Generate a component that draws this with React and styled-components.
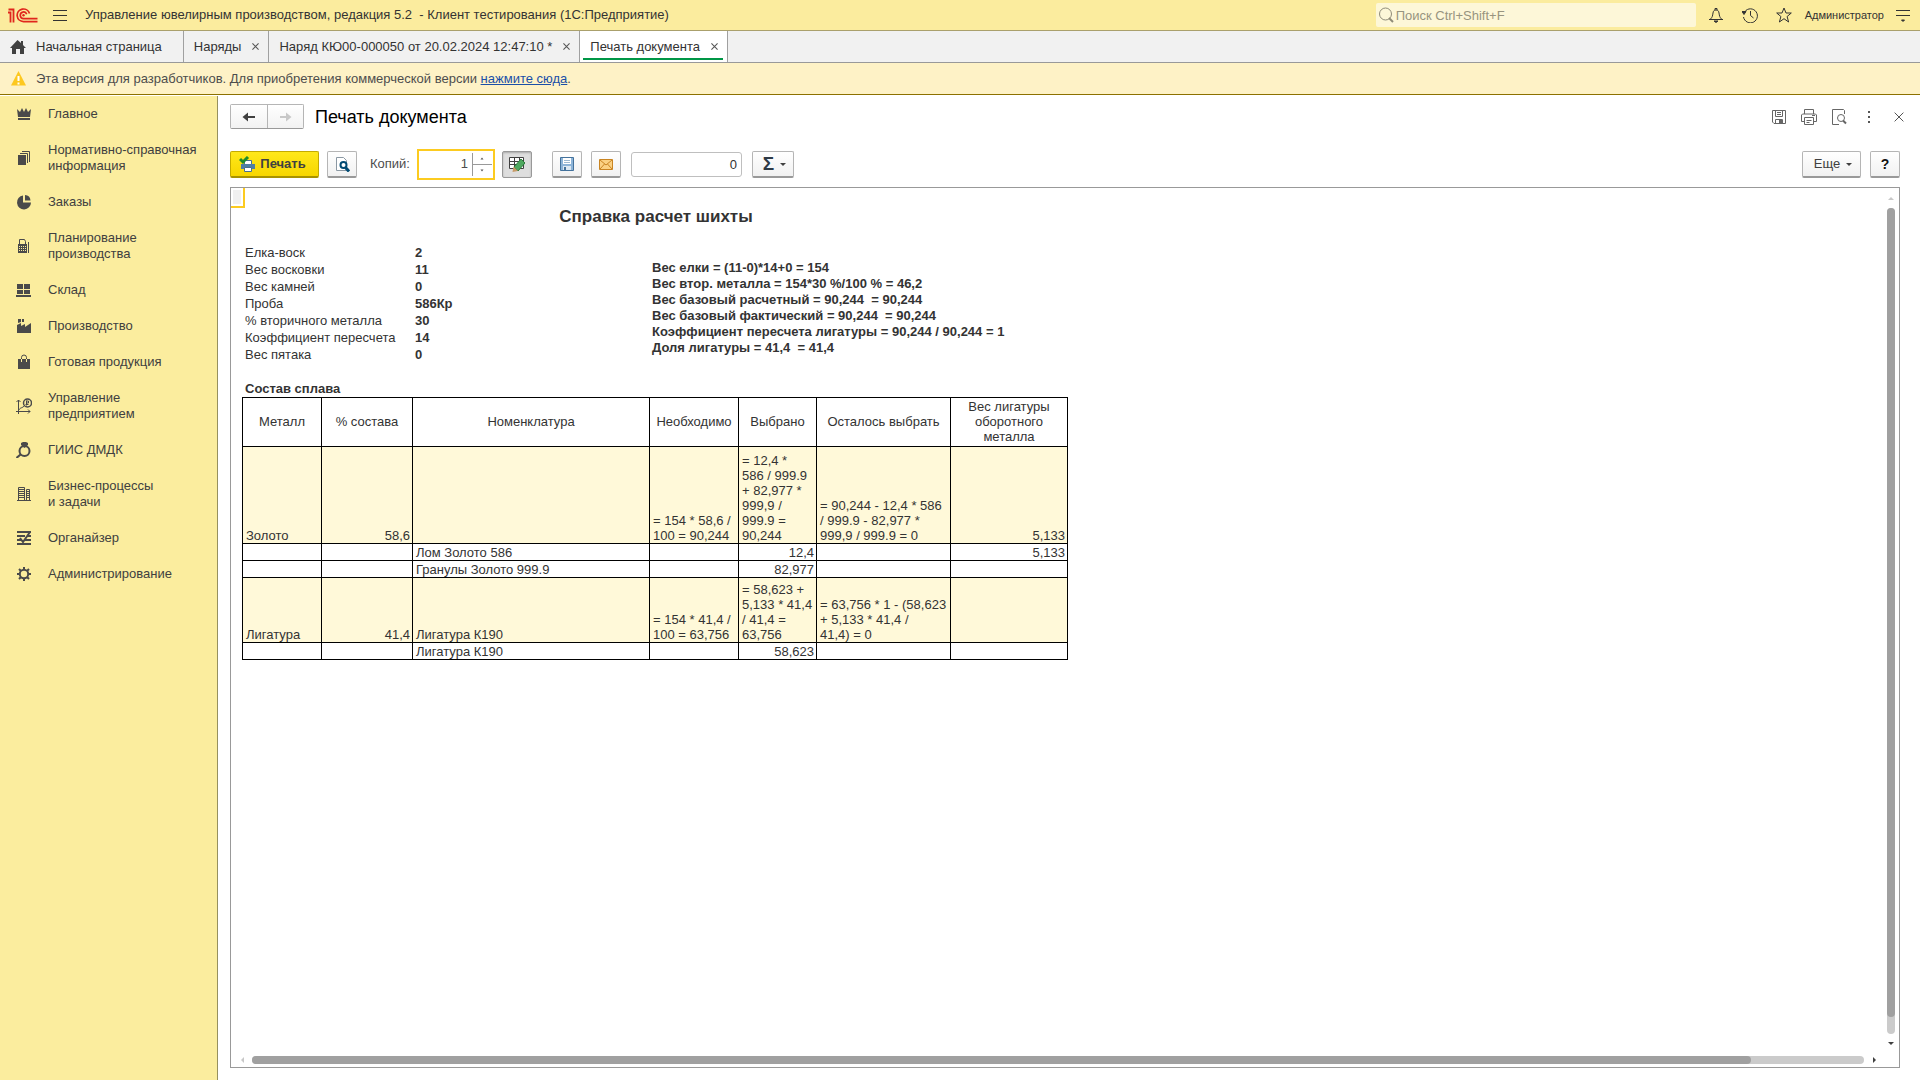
import React from "react";
import styled, { createGlobalStyle } from "styled-components";

const GlobalStyle = createGlobalStyle`
   * {
      box-sizing: border-box;
   }

   body {
      margin: 0;
      background: #fff;
      color: #333;
      font-family: "Liberation Sans", Arial, sans-serif;
      font-size: 13px;
      line-height: 16px;
   }

   button,
   input {
      font: inherit;
      color: inherit;
   }

   button {
      cursor: pointer;
   }

   svg {
      display: block;
      flex: none;
   }
`;

const Page = styled.div`
   display: flex;
   flex-direction: column;
   min-height: 100vh;
`;

const TopBar = styled.header`
   display: flex;
   align-items: center;
   height: 31px;
   padding: 0 9px 0 8px;
   background: #fbec9e;
   border-bottom: 1px solid #aaa06c;
`;

const PlainButton = styled.button`
   display: flex;
   align-items: center;
   justify-content: center;
   width: ${props => props.$width || 16}px;
   height: 20px;
   padding: 0;
   border: 0;
   background: none;
   color: #333;
`;

const AppTitle = styled.h1`
   flex: 1;
   margin: 0 0 0 3px;
   font-size: 13px;
   font-weight: 400;
   white-space: pre;
`;

const Search = styled.label`
   display: flex;
   align-items: center;
   gap: 2px;
   width: 320px;
   height: 24px;
   padding: 0 2px;
   border-radius: 2px;
   background: #fdf7d8;
   color: #8f8b78;

   input {
      flex: 1;
      min-width: 0;
      height: 20px;
      padding: 0;
      border: 0;
      outline: 0;
      background: none;
   }

   input::placeholder {
      color: #98947f;
      opacity: 1;
   }
`;

const TopTools = styled.div`
   display: flex;
   align-items: center;
   gap: 16px;
   margin-left: 11px;
`;

const UserName = styled.a`
   margin: 0 -5px 0 -4px;
   color: #333;
   font-size: 11px;
   text-decoration: none;
`;

const TabBar = styled.nav`
   display: flex;
   height: 32px;
   background: #f1f1f1;
   border-bottom: 1px solid #999;
`;

const Tab = styled.div`
   display: flex;
   align-items: center;
   gap: 8px;
   padding: 0 6px 0 10px;
   border-right: 1px solid #a0a0a0;
   background: ${props => (props.$active ? "#fff" : "transparent")};
   box-shadow: ${props =>
      props.$active
         ? "inset 3px 0 #fff, inset -4px 0 #fff, inset 0 -2px #fff, inset 0 -4px #009646"
         : "none"};

   a {
      display: flex;
      align-items: center;
      gap: 10px;
      color: #333;
      text-decoration: none;
   }
`;

const HomeTab = styled(Tab)`
   padding-right: 21px;
`;

const Notice = styled.div`
   display: flex;
   align-items: center;
   gap: 10px;
   height: 32px;
   padding-left: 11px;
   background: #fef2c6;
   border-bottom: 1px solid #8c7100;
   color: #4d4d4d;

   a {
      color: #1a4fa8;
   }
`;

const Body = styled.div`
   display: flex;
   flex: 1;
   padding-top: 1px;
`;

const Sidebar = styled.nav`
   width: 218px;
   flex: none;
   background: #fbed9e;
   border-right: 1px solid #96905e;
`;

const SideLink = styled.a`
   display: flex;
   align-items: center;
   gap: 16px;
   padding: 10px 8px 10px 16px;
   color: #404040;
   text-decoration: none;

   span {
      white-space: pre-line;
   }
`;

const Main = styled.main`
   display: flex;
   flex: 1;
   flex-direction: column;
   min-width: 0;
   padding: 8px 20px 12px 12px;
`;

const FormHead = styled.div`
   display: flex;
   align-items: center;
   height: 25px;
`;

const History = styled.div`
   display: flex;
   height: 25px;
   border: 1px solid #b5b5b5;
   border-bottom-color: #999;
   border-radius: 2px;

   button {
      display: flex;
      align-items: center;
      justify-content: center;
      width: 36px;
      padding: 0;
      border: 0;
      background: linear-gradient(#fff, #f2f2f2);
   }

   button + button {
      border-left: 1px solid #b5b5b5;
   }
`;

const FormTitle = styled.h2`
   flex: 1;
   margin: 0 0 0 11px;
   color: #000;
   font-size: 18px;
   font-weight: 400;
   line-height: 24px;
`;

const FormTools = styled.div`
   display: flex;
   align-items: center;
   gap: 14px;
   margin-right: -7px;
`;

const Toolbar = styled.div`
   display: flex;
   align-items: center;
   height: 32px;
   margin: 19px 0 7px;
`;

const ToolButton = styled.button`
   display: flex;
   align-items: center;
   justify-content: center;
   gap: 5px;
   width: ${props => props.$width || 30}px;
   height: 27px;
   margin-right: ${props => props.$after || 0}px;
   padding: 0;
   border: 1px solid #b5b5b5;
   border-bottom: 2px solid #999;
   border-radius: 2px;
   background: linear-gradient(#fff, #f1f1f1);
   color: #404040;
`;

const PrintButton = styled(ToolButton)`
   padding-right: 4px;
   border-color: #c4ab00;
   border-bottom-color: #a89200;
   background: linear-gradient(#ffe81a, #f7d600);
   font-weight: 700;
`;

const MenuButton = styled(ToolButton)`
   padding-left: 4px;
`;

const PressedButton = styled(ToolButton)`
   border: 1px solid #999;
   background: #dedede;
   box-shadow: inset 0 1px 2px #aaa;
`;

const CopiesLabel = styled.label`
   margin-right: 7px;
   color: #4d4d4d;
`;

const Spinner = styled.div`
   display: flex;
   width: 78px;
   height: 31px;
   margin-right: 7px;
   padding: 2px 1px;
   border: 2px solid #fccb20;
   background: #fff;

   input {
      flex: 1;
      min-width: 0;
      padding: 0 4px;
      border: 0;
      outline: 0;
      color: #4d4d4d;
      text-align: right;
   }
`;

const Steps = styled.div`
   display: flex;
   flex-direction: column;
   width: 20px;
   border-left: 1px solid #999;

   button {
      display: flex;
      flex: 1;
      align-items: center;
      justify-content: center;
      padding: 0;
      border: 0;
      background: none;
   }

   button + button {
      border-top: 1px solid #999;
   }
`;

const SumInput = styled.input`
   width: 111px;
   height: 25px;
   margin-right: 10px;
   padding: 0 4px;
   border: 1px solid #bfbfbf;
   border-radius: 3px;
   text-align: right;
`;

const Sigma = styled.span`
   font-size: 19px;
   font-weight: 700;
   line-height: 20px;
   color: #2e3a46;
`;

const Spacer = styled.div`
   flex: 1;
`;

const HelpMark = styled.span`
   color: #111;
   font-size: 14px;
   font-weight: 700;
`;

const Report = styled.section`
   position: relative;
   display: grid;
   flex: 1;
   grid-template-columns: 1fr 18px;
   grid-template-rows: 1fr 16px;
   border: 1px solid #999;
   background: #fff;
`;

const CellCursor = styled.div`
   position: absolute;
   top: 0;
   left: 0;
   width: 14px;
   height: 20px;
   border: solid #fccb20;
   border-width: 0 2px 2px 0;
   background: #f0f0f0;
   box-shadow: inset 0 0 0 2px #fff;
`;

const Sheet = styled.div`
   min-width: 0;
   padding: 19px 0 0 11px;
`;

const SheetTitle = styled.h3`
   width: 828px;
   margin: 0 0 17px;
   color: #333;
   font-size: 17px;
   line-height: 20px;
   text-align: center;
`;

const Summary = styled.div`
   display: flex;
   align-items: flex-start;
   padding-left: 3px;
`;

const Facts = styled.dl`
   display: grid;
   grid-template-columns: 170px 237px;
   margin: 0;
   line-height: 17px;

   dd {
      margin: 0;
      font-weight: 700;
   }
`;

const Formulas = styled.div`
   padding-top: 16px;
   font-weight: 700;
   white-space: pre;
`;

const TableTitle = styled.h4`
   margin: 17px 0 0;
   padding-left: 3px;
   font-size: 13px;
   line-height: 17px;
`;

const Alloy = styled.table`
   width: 826px;
   table-layout: fixed;
   border: solid #000;
   border-width: 1px 0 0 1px;
   border-spacing: 0;
   line-height: 15px;

   th,
   td {
      padding: 0 2px 0 3px;
      border: solid #000;
      border-width: 0 1px 1px 0;
      white-space: pre-line;
   }

   th {
      padding: 0 2px 2px;
      font-weight: 400;
      vertical-align: middle;
   }

   td {
      vertical-align: bottom;
   }
`;

const Row = styled.tr`
   height: ${props => props.$height}px;
   background: ${props => (props.$group ? "#fff9d9" : "#fff")};
`;

const Cell = styled.td`
   text-align: ${props => props.$align || "left"};
`;

const VScroll = styled.div`
   display: flex;
   flex-direction: column;
   align-items: center;
   padding: 7px 0 4px 1px;
`;

const HScroll = styled.div`
   display: flex;
   align-items: center;
   padding: 1px 3px 0 8px;
`;

const VTrack = styled.div`
   flex: 1;
   width: 8px;
   margin: 5px 0;
   border-radius: 4px;
   background: #cbcbcb;
`;

const VThumb = styled.div`
   height: 98%;
   border-radius: 4px;
   background: #a0a0a0;
`;

const HTrack = styled.div`
   flex: 1;
   height: 8px;
   margin: 0 6px 0 5px;
   border-radius: 4px;
   background: #cbcbcb;
`;

const HThumb = styled.div`
   width: 93%;
   height: 8px;
   border-radius: 4px;
   background: #a0a0a0;
`;

const Icon = ({ size = 16, children, ...rest }) => (
   <svg
      width={size}
      height={size}
      viewBox={`0 0 ${size} ${size}`}
      fill="none"
      aria-hidden="true"
      {...rest}
   >
      {children}
   </svg>
);

const Cross = ({ size = 7, color = "#555" }) => (
   <svg width={size} height={size} viewBox="0 0 8 8" aria-hidden="true">
      <path d="M.5.5l7 7M7.5.5l-7 7" stroke={color} strokeWidth={size > 8 ? 0.8 : 1.2} />
   </svg>
);

const Arrow = ({ dir = "down", color = "#404040" }) => {
   const shapes = {
      down: "M1 3h6L4 6z",
      up: "M1 5h6L4 2z",
      left: "M5 1v6L2 4z",
      right: "M3 1v6l3-3z"
   };
   return (
      <svg width="8" height="8" viewBox="0 0 8 8" aria-hidden="true">
         <path d={shapes[dir]} fill={color} />
      </svg>
   );
};

const Logo = () => (
   <svg width="30" height="15" viewBox="0 0 30 15" fill="none" aria-label="1С">
      <path d="M0 4.500h2.500V14.500M.500 1.500H5.500V14.500" stroke="#e0261c" strokeWidth="1.800" />
      <path
         d="M21.500 5.500A6.300 6.300 0 1 0 15.500 13.600H29.500M18.700 6.200A3.300 3.300 0 1 0 15.500 10.600H29.500"
         stroke="#e0261c"
         strokeWidth="1.700"
      />
      <circle cx="15.500" cy="7.300" r="1.200" fill="#e0261c" />
   </svg>
);

const sideIcons = {
   crown: (
      <path d="M1 3l3 3 2-4 2 4 2-4 2 4 3-3-1 8H2zM2 12h12v2H2z" fill="#4a4a4a" />
   ),
   books: (
      <g>
         <path d="M2 5h8v10H2z" fill="#4a4a4a" />
         <path d="M4 3.500h7.500V13M6 1.500h7.500V12" stroke="#4a4a4a" />
      </g>
   ),
   pie: (
      <g fill="#4a4a4a">
         <path d="M7 1.500v7h8a7 7 0 1 1-8-7z" />
         <path d="M9 1a6 6 0 0 1 5.500 5.500H9z" />
      </g>
   ),
   register: (
      <g>
         <path d="M2 6h9v9H2zM12 4h1v11h-1z" fill="#4a4a4a" />
         <path d="M3.500 6V1.500h5l1 2V6" stroke="#4a4a4a" />
         <path
            d="M3 8.500h7M3 10.500h7M3 12.500h7"
            stroke="#fbed9e"
            strokeDasharray="1 1"
         />
      </g>
   ),
   stock: (
      <path
         d="M1 2h6v5H1zM8 2h6v5H8zM1 8h6v4H1zM8 8h6v4H8zM0 13h15v2H0z"
         fill="#4a4a4a"
      />
   ),
   factory: (
      <path d="M1 15V7l4-2v3l4-2v3l6-4v10zM2 1h3v3L2 5zM6 1h2v3H6z" fill="#4a4a4a" />
   ),
   bag: (
      <g>
         <path d="M2 5h12v10H2z" fill="#4a4a4a" />
         <path d="M5.500 5V3.500Q5.500 1 8 1t2.500 2.500V5" stroke="#4a4a4a" />
         <path d="M5.500 5v3M10.500 5v3" stroke="#fbed9e" />
      </g>
   ),
   manage: (
      <g>
         <path
            d="M2.500 2v14M0 13.500h14M.500 4l2-2 2 2M12 11.500l2 2-2 2M3 12c1-3 3-1 6-5"
            stroke="#4a4a4a"
         />
         <circle cx="11.500" cy="5" r="4" fill="#fbed9e" stroke="#4a4a4a" strokeWidth="1.500" />
         <path d="M10.500 2.500v5M10.500 3h2v2h-2M9.500 6.500h3" stroke="#4a4a4a" />
      </g>
   ),
   ring: (
      <g>
         <circle cx="8.500" cy="9" r="5" stroke="#4a4a4a" strokeWidth="2" />
         <path d="M4.500 12.500L.500 16" stroke="#4a4a4a" strokeWidth="2" />
         <path d="M5 1l2-1h3l2 1v2L8.500 6 5 3z" fill="#4a4a4a" />
      </g>
   ),
   building: (
      <g>
         <path
            d="M2.500 15V1.500h6V15M10.500 15V3.500h3V15M1 14.500h14"
            stroke="#4a4a4a"
         />
         <path
            d="M3 3.500h5M3 5.500h5M3 7.500h5M3 9.500h5M3 11.500h5M10 5.500h4M10 7.500h4M10 9.500h4M10 11.500h4"
            stroke="#4a4a4a"
         />
      </g>
   ),
   organizer: (
      <path
         d="M1 2h14M1 6h8M12 6h3M1 10h4M9 10h6M1 14h14M14 2L7 12 4 8"
         stroke="#4a4a4a"
         strokeWidth="2"
      />
   ),
   gear: (
      <g stroke="#4a4a4a" strokeWidth="2">
         <circle cx="8" cy="8" r="4.200" />
         <path d="M8 1v3M8 12v3M1 8h3M12 8h3M3 3l2 2M11 11l2 2M13 3l-2 2M5 11l-2 2" />
      </g>
   )
};

const sections = [
   { icon: "crown", text: "Главное" },
   { icon: "books", text: "Нормативно-справочная\nинформация" },
   { icon: "pie", text: "Заказы" },
   { icon: "register", text: "Планирование\nпроизводства" },
   { icon: "stock", text: "Склад" },
   { icon: "factory", text: "Производство" },
   { icon: "bag", text: "Готовая продукция" },
   { icon: "manage", text: "Управление\nпредприятием" },
   { icon: "ring", text: "ГИИС ДМДК" },
   { icon: "building", text: "Бизнес-процессы\nи задачи" },
   { icon: "organizer", text: "Органайзер" },
   { icon: "gear", text: "Администрирование" }
];

const tabs = [
   { text: "Наряды" },
   { text: "Наряд КЮ00-000050 от 20.02.2024 12:47:10 *" },
   { text: "Печать документа", active: true }
];

const facts = [
   ["Елка-воск", "2"],
   ["Вес восковки", "11"],
   ["Вес камней", "0"],
   ["Проба", "586Кр"],
   ["% вторичного металла", "30"],
   ["Коэффициент пересчета", "14"],
   ["Вес пятака", "0"]
];

const formulas = [
   "Вес елки = (11-0)*14+0 = 154",
   "Вес втор. металла = 154*30 %/100 % = 46,2",
   "Вес базовый расчетный = 90,244  = 90,244",
   "Вес базовый фактический = 90,244  = 90,244",
   "Коэффициент пересчета лигатуры = 90,244 / 90,244 = 1",
   "Доля лигатуры = 41,4  = 41,4"
];

const columns = [
   { title: "Металл", width: 79 },
   { title: "% состава", width: 91, align: "right" },
   { title: "Номенклатура", width: 237 },
   { title: "Необходимо", width: 89 },
   { title: "Выбрано", width: 78 },
   { title: "Осталось выбрать", width: 134 },
   { title: "Вес лигатуры оборотного металла", width: 117, align: "right" }
];

const rows = [
   {
      group: true,
      height: 97,
      cells: [
         "Золото",
         "58,6",
         "",
         "= 154 * 58,6 /\n100 = 90,244",
         "= 12,4 *\n586 / 999.9\n+ 82,977 *\n999,9 /\n999.9 =\n90,244",
         "= 90,244 - 12,4 * 586\n/ 999.9 - 82,977 *\n999,9 / 999.9 = 0",
         "5,133"
      ]
   },
   { height: 17, cells: ["", "", "Лом Золото 586", "", "12,4", "", "5,133"] },
   { height: 17, cells: ["", "", "Гранулы Золото 999.9", "", "82,977", "", ""] },
   {
      group: true,
      height: 65,
      cells: [
         "Лигатура",
         "41,4",
         "Лигатура К190",
         "= 154 * 41,4 /\n100 = 63,756",
         "= 58,623 +\n5,133 * 41,4\n/ 41,4 =\n63,756",
         "= 63,756 * 1 - (58,623\n+ 5,133 * 41,4 /\n41,4) = 0",
         ""
      ]
   },
   { height: 17, cells: ["", "", "Лигатура К190", "", "58,623", "", ""] }
];

// detail rows hold plain amounts, so the chosen weight goes to the right edge
const cellAlign = (row, index) =>
   !row.group && index === 4 ? "right" : columns[index].align;

const Header = () => (
   <TopBar>
      <Logo />
      <PlainButton $width={44} aria-label="Меню">
         <Icon>
            <path d="M1 3.500h14M1 8.500h14M1 13.500h14" stroke="#333" />
         </Icon>
      </PlainButton>
      <AppTitle>
         {"Управление ювелирным производством, редакция 5.2  - Клиент тестирования (1С:Предприятие)"}
      </AppTitle>
      <Search>
         <Icon>
            <circle cx="7.500" cy="7" r="6" stroke="#8f8b78" />
            <path d="M11 11l4 4" stroke="#8f8b78" strokeWidth="2" />
         </Icon>
         <input placeholder="Поиск Ctrl+Shift+F" aria-label="Поиск" />
      </Search>
      <TopTools>
         <PlainButton $width={18} aria-label="Уведомления">
            <Icon stroke="#333">
               <path d="M1 12.500h14M2.500 12c2-2 2-3 2.500-6 .3-2 1-3 3-3s2.700 1 3 3c.5 3 .5 4 2.500 6M7 3V1.500h2V3" />
               <path d="M6 14h4l-2 1.500z" fill="#333" />
            </Icon>
         </PlainButton>
         <PlainButton $width={18} aria-label="История">
            <Icon stroke="#333">
               <path d="M2 6a7 7 0 1 1-.500 4M8.500 4v4.500l3 2.500" />
               <path d="M0 4.500h4L2 7.500z" fill="#333" />
            </Icon>
         </PlainButton>
         <PlainButton $width={18} aria-label="Избранное">
            <Icon stroke="#333">
               <path d="M8 1l2 5h5.300l-4.200 3.500 1.500 5.500L8 11.700 3.400 15l1.500-5.500L.700 6H6z" />
            </Icon>
         </PlainButton>
         <UserName href="#user">Администратор</UserName>
         <PlainButton aria-label="Сервис">
            <Icon stroke="#333">
               <path d="M1 3.500h14M1 8.500h14" />
               <path d="M6.500 13h3L8 14.500z" fill="#333" />
            </Icon>
         </PlainButton>
      </TopTools>
   </TopBar>
);

const Tabs = () => (
   <TabBar>
      <HomeTab>
         <a href="#home">
            <Icon>
               <path d="M7.500 1L0 9h2v6h4v-5h4v5h4V9h2l-3-3V2h-2v2z" fill="#404040" />
            </Icon>
            Начальная страница
         </a>
      </HomeTab>
      {tabs.map(tab => (
         <Tab key={tab.text} $active={tab.active}>
            <a href="#tab">{tab.text}</a>
            <PlainButton $width={13} aria-label={`Закрыть ${tab.text}`}>
               <Cross />
            </PlainButton>
         </Tab>
      ))}
   </TabBar>
);

const FormHeader = () => (
   <FormHead>
      <History>
         <button aria-label="Назад">
            <Icon>
               <path d="M7 3.500L1.500 8 7 12.500V9h7V7H7z" fill="#404040" />
            </Icon>
         </button>
         <button aria-label="Вперед">
            <Icon>
               <path d="M8 3.500L13.500 8 8 12.500V9H2V7h6z" fill="#c8c8c8" />
            </Icon>
         </button>
      </History>
      <FormTitle>Печать документа</FormTitle>
      <FormTools>
         <PlainButton aria-label="Сохранить">
            <Icon stroke="#666">
               <path d="M1.500 1.500h13v13H3l-1.500-1.500zM4.500 1.500v6h7v-6M6 3.500h4M6 5.500h4M4.500 14.500v-4h7v4" />
               <path d="M8 11h3v3H8z" fill="#666" stroke="none" />
            </Icon>
         </PlainButton>
         <PlainButton aria-label="Печать">
            <Icon stroke="#666">
               <path d="M3.500 5V.500h9V5M3.500 12.500H.500V6l1-1h13l1 1v6.500h-3M3.500 8.500h9v7h-9zM5.500 11.500h5M5.500 13.500h3M11 6.500h3" />
            </Icon>
         </PlainButton>
         <PlainButton aria-label="Просмотр">
            <Icon stroke="#666">
               <path d="M13.500 5V1.500L12.500.500h-11v15H8" />
               <circle cx="10" cy="9" r="3.500" />
               <path d="M12 11.500l3 3" strokeWidth="2" />
            </Icon>
         </PlainButton>
         <PlainButton aria-label="Еще">
            <Icon>
               <path d="M7 2h2v2H7zM7 7h2v2H7zM7 12h2v2H7z" fill="#555" />
            </Icon>
         </PlainButton>
         <PlainButton aria-label="Закрыть">
            <Cross size={10} />
         </PlainButton>
      </FormTools>
   </FormHead>
);

const Commands = () => (
   <Toolbar>
      <PrintButton $width={89} $after={8}>
         <Icon>
            <path d="M5.500 8V4.500h7V8" fill="#fff" stroke="#49708f" />
            <path d="M2 8h14v5H2z" fill="#4e7ea3" />
            <path d="M5.500 11.500h7v4h-7z" fill="#fff" stroke="#49708f" />
            <path d="M1 3l3 3 5-5" stroke="#1e8c2b" strokeWidth="3" />
         </Icon>
         Печать
      </PrintButton>
      <ToolButton $after={13} aria-label="Предварительный просмотр">
         <Icon>
            <path d="M2.500 1.500h7l3 3v10h-10z" fill="#fff" stroke="#8b98a3" />
            <circle cx="9.500" cy="9" r="3" fill="#fff" stroke="#004a73" strokeWidth="2" />
            <path d="M11.500 11.500l3.500 4" stroke="#004a73" strokeWidth="3" />
         </Icon>
      </ToolButton>
      <CopiesLabel htmlFor="copies">Копий:</CopiesLabel>
      <Spinner>
         <input id="copies" defaultValue="1" />
         <Steps>
            <button aria-label="Больше">
               <svg width="4" height="3" aria-hidden="true">
                  <path d="M.5 2.500h3L2 .500z" fill="#555" />
               </svg>
            </button>
            <button aria-label="Меньше">
               <svg width="4" height="3" aria-hidden="true">
                  <path d="M.5.500h3L2 2.500z" fill="#555" />
               </svg>
            </button>
         </Steps>
      </Spinner>
      <PressedButton $after={20} aria-label="Редактирование">
         <Icon>
            <path
               d="M.500 1.500h14v11H.500zM.500 5.500h14M.500 8.500h14M5.500 1.500v11M10.500 1.500v11"
               fill="#fff"
               stroke="#404040"
            />
            <path d="M5 11l7-8 4 4-7 8z" fill="#4fa860" stroke="#2c7a3a" />
            <path d="M3.500 16l1-5.500 4.500 4.500z" fill="#c79a68" />
         </Icon>
      </PressedButton>
      <ToolButton $after={9} aria-label="Сохранить на диск">
         <Icon>
            <path d="M1.500 1.500h13v13h-13z" fill="#8db4d8" stroke="#44729c" />
            <path d="M4 2h8v6H4z" fill="#fff" />
            <path d="M5 4.500h6M5 6.500h6" stroke="#9db9d1" />
            <path d="M4 10h8v4H4z" fill="#dce8f2" />
            <path d="M5 11h2v3H5z" fill="#44729c" />
         </Icon>
      </ToolButton>
      <ToolButton $after={10} aria-label="Отправить по почте">
         <Icon>
            <path d="M1.500 3.500h13v10h-13z" fill="#fbd183" stroke="#c98422" />
            <path d="M2 4l6 5 6-5M2 13l4.500-5M14 13L9.500 8" stroke="#c98422" />
         </Icon>
      </ToolButton>
      <SumInput defaultValue="0" aria-label="Сумма" />
      <MenuButton $width={42} aria-label="Итоги">
         <Sigma>Σ</Sigma>
         <Arrow />
      </MenuButton>
      <Spacer />
      <MenuButton $width={59} $after={9}>
         Еще
         <Arrow />
      </MenuButton>
      <ToolButton aria-label="Справка">
         <HelpMark>?</HelpMark>
      </ToolButton>
   </Toolbar>
);

const AlloyTable = () => (
   <Alloy>
      <colgroup>
         {columns.map(column => (
            <col key={column.title} style={{ width: column.width }} />
         ))}
      </colgroup>
      <thead>
         <Row $height={49}>
            {columns.map(column => (
               <th key={column.title}>{column.title}</th>
            ))}
         </Row>
      </thead>
      <tbody>
         {rows.map((row, i) => (
            <Row key={i} $height={row.height} $group={row.group}>
               {row.cells.map((text, j) => (
                  <Cell key={j} $align={cellAlign(row, j)}>
                     {text}
                  </Cell>
               ))}
            </Row>
         ))}
      </tbody>
   </Alloy>
);

const App = () => (
   <Page>
      <GlobalStyle />
      <Header />
      <Tabs />
      <Notice>
         <Icon size={15}>
            <path d="M7.500 0L15 14.500H0z" fill="#fdc820" />
            <path d="M7.500 5v5M7.500 11.500v2" stroke="#fff" strokeWidth="2" />
         </Icon>
         <span>
            Эта версия для разработчиков. Для приобретения коммерческой версии{" "}
            <a href="#buy">нажмите сюда</a>.
         </span>
      </Notice>
      <Body>
         <Sidebar>
            {sections.map(section => (
               <SideLink key={section.icon} href={`#${section.icon}`}>
                  <Icon>{sideIcons[section.icon]}</Icon>
                  <span>{section.text}</span>
               </SideLink>
            ))}
         </Sidebar>
         <Main>
            <FormHeader />
            <Commands />
            <Report>
               <Sheet>
                  <SheetTitle>Справка расчет шихты</SheetTitle>
                  <Summary>
                     <Facts>
                        {facts.map(([name, value]) => (
                           <React.Fragment key={name}>
                              <dt>{name}</dt>
                              <dd>{value}</dd>
                           </React.Fragment>
                        ))}
                     </Facts>
                     <Formulas>
                        {formulas.map(line => (
                           <div key={line}>{line}</div>
                        ))}
                     </Formulas>
                  </Summary>
                  <TableTitle>Состав сплава</TableTitle>
                  <AlloyTable />
               </Sheet>
               <VScroll>
                  <Arrow dir="up" color="#c8c8c8" />
                  <VTrack>
                     <VThumb />
                  </VTrack>
                  <Arrow dir="down" />
               </VScroll>
               <HScroll>
                  <Arrow dir="left" color="#c8c8c8" />
                  <HTrack>
                     <HThumb />
                  </HTrack>
                  <Arrow dir="right" />
               </HScroll>
               <CellCursor />
            </Report>
         </Main>
      </Body>
   </Page>
);

export default App;
